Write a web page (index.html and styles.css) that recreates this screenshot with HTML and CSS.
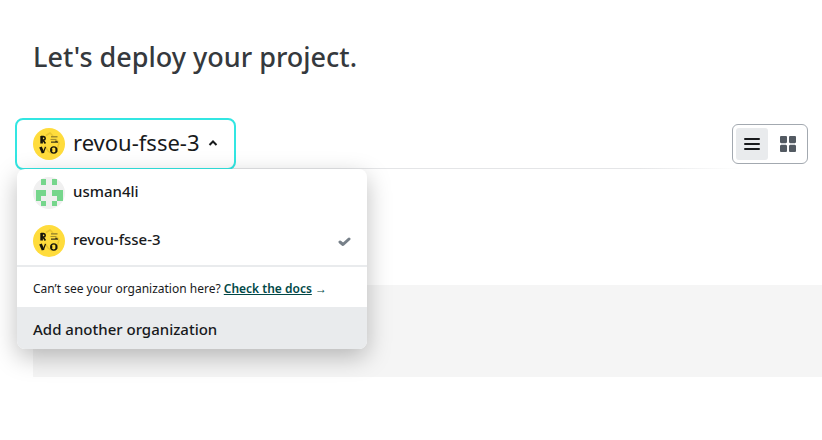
FILE: index.html
```html
<!DOCTYPE html>
<html lang="en">
<head>
<meta charset="utf-8">
<meta name="viewport" content="width=device-width, initial-scale=1">
<title>Let's deploy your project.</title>
<link rel="stylesheet" href="styles.css">
</head>
<body>
<svg class="defs" aria-hidden="true">
  <symbol id="revou" viewBox="0 0 32 32">
    <circle cx="16" cy="16" r="16" fill="#ffdc3c"/>
    <path d="M13 7.500 17 5l3 3M24 12l2 3-1.500 5M12 18l3 5 4 3" fill="none" stroke="#e9c52f" stroke-width="1.500"/>
    <path d="M8.600 8v7.500" stroke="#17150c" stroke-width="2.600"/>
    <path d="M8 8.600h2.500a1.700 1.700 0 0 1 0 3.400H8.500M10 12l2.400 3.500" fill="none" stroke="#17150c" stroke-width="1.600"/>
    <path d="M18 8.800h6.500" stroke="#8a782a" stroke-width="1.200"/>
    <path d="M17.500 11.500h6" stroke="#a8922e" stroke-width="1.200"/>
    <path d="M18 14.200h7M22.500 12.800l2 1.400" stroke="#3f3818" stroke-width="1.300"/>
    <path d="M7.500 19l2.600 6" stroke="#17150c" stroke-width="2.800"/>
    <path d="M10.200 25l2.300-6" stroke="#17150c" stroke-width="1.200"/>
    <ellipse cx="20.800" cy="22" rx="3" ry="3.100" fill="none" stroke="#17150c" stroke-width="1.300"/>
    <path d="M18.400 20.500v3M23.300 20v4" stroke="#17150c" stroke-width="1.800"/>
  </symbol>
</svg>
<main class="page">
  <h1 class="title">Let's deploy your project.</h1>
  <div class="toolbar">
    <div class="picker">
      <button class="picker-button" type="button" aria-expanded="true" aria-haspopup="menu">
        <svg class="avatar" aria-hidden="true"><use href="#revou"/></svg>
        <span class="name">revou-fsse-3</span>
        <svg class="caret" viewBox="0 0 10 10" aria-hidden="true"><path d="M1.500 6 5 2.500 8.500 6" fill="none" stroke="#181a1c" stroke-width="2"/></svg>
      </button>
      <div class="menu">
        <button class="option" type="button">
          <svg class="avatar" viewBox="0 0 32 32" aria-hidden="true">
            <clipPath id="round"><circle cx="16" cy="16" r="16"/></clipPath>
            <g clip-path="url(#round)">
              <path fill="#f0f0f0" d="M0 0h32v32H0z"/>
              <path fill="#76d68c" d="M8 2h5v6H8zM19 2h5v6h-5zM3 13h10v6H8v5H3zM19 13h11v11h-6v-5h-5zM8 24h5v5H8zM19 24h5v5h-5z"/>
            </g>
          </svg>
          <span class="name">usman4li</span>
        </button>
        <button class="option" type="button">
          <svg class="avatar" aria-hidden="true"><use href="#revou"/></svg>
          <span class="name">revou-fsse-3</span>
          <svg class="check" viewBox="0 0 14 12" aria-hidden="true"><path d="M3 7 6 9.500 12 4" fill="none" stroke="#778089" stroke-width="3" stroke-linecap="round" stroke-linejoin="round"/></svg>
        </button>
        <p class="hint">Can’t see your organization here? <a class="link" href="#docs"><span class="link-text">Check the docs</span> →</a></p>
        <button class="add" type="button">Add another organization</button>
      </div>
    </div>
    <div class="views">
      <button class="view view-active" type="button" aria-label="List view">
        <svg viewBox="0 0 16 16" aria-hidden="true"><path d="M1 3h14M1 8h14M1 13h14" stroke="#181a1c" stroke-width="2" stroke-linecap="round"/></svg>
      </button>
      <button class="view" type="button" aria-label="Grid view">
        <svg viewBox="0 0 16 16" aria-hidden="true"><path fill="#d5d7da" d="M1 7h5v2H1zM10 7h5v2h-5z"/><g fill="#535a62"><rect width="7" height="7" rx="1"/><rect x="9" width="7" height="7" rx="1"/><rect y="9" width="7" height="7" rx="1"/><rect x="9" y="9" width="7" height="7" rx="1"/></g></svg>
      </button>
    </div>
  </div>
  <section class="placeholder" aria-label="Repositories"></section>
</main>
</body>
</html>
```
FILE: styles.css
```css
* {
  box-sizing: border-box;
}

body {
  margin: 0;
  background: #fff;
  color: #181a1c;
  font-family: "Noto Sans", sans-serif;
  font-size: 15px;
  font-weight: 500;
}

button {
  margin: 0;
  border: 0;
  background: none;
  color: inherit;
  font: inherit;
  text-align: left;
  cursor: pointer;
}

.defs {
  position: absolute;
  width: 0;
  height: 0;
}

.page {
  padding: 38px 0 40px 33px;
}

.title {
  margin: 0 0 42px;
  color: #35393d;
  font-size: 27px;
  font-weight: 500;
  line-height: 38px;
}

.toolbar {
  display: flex;
  align-items: center;
  justify-content: space-between;
  margin-left: -18px;
  padding-right: 14px;
  background: linear-gradient(to right, #e4e5e7 75%, transparent 88%) 18px 50px / 100% 1px no-repeat;
}

.picker {
  position: relative;
}

.picker-button {
  display: flex;
  align-items: center;
  gap: 8px;
  height: 52px;
  padding: 0 16px;
  border: 2px solid #32e6e2;
  border-radius: 8px;
  background: #fff;
  font-size: 22px;
  font-weight: 400;
}

.avatar {
  flex: none;
  width: 32px;
  height: 32px;
}

.name {
  padding-bottom: 4px;
}

.caret {
  width: 10px;
  height: 10px;
}

.menu {
  position: absolute;
  top: 51px;
  left: 2px;
  width: 350px;
  overflow: hidden;
  border-radius: 8px;
  background: #fff;
  box-shadow: 0 8px 24px rgba(0, 0, 0, 0.26);
}

.option {
  display: flex;
  align-items: center;
  gap: 8px;
  width: 100%;
  height: 48px;
  padding: 0 16px;
}

.check {
  width: 14px;
  height: 12px;
  margin-left: auto;
}

.hint {
  margin: 0;
  padding: 12px 16px 8px;
  border-top: 2px solid #e9ebed;
  font-size: 12px;
  font-weight: 400;
  line-height: 20px;
}

.link {
  color: #014847;
  text-decoration: none;
}

.link-text {
  font-weight: 600;
  text-decoration: underline;
}

.add {
  display: block;
  width: 100%;
  height: 42px;
  padding: 2px 16px 0;
  background: #e9ebed;
}

.views {
  display: flex;
  gap: 4px;
  padding: 3px;
  border: 1px solid #a3a9b0;
  border-radius: 6px;
}

.view {
  display: grid;
  place-items: center;
  width: 32px;
  height: 32px;
  padding: 0;
  border-radius: 3px;
}

.view svg {
  width: 16px;
  height: 16px;
}

.view-active {
  background: #e9ebed;
}

.placeholder {
  height: 92px;
  margin-top: 115px;
  background: #f5f5f5;
}
```
